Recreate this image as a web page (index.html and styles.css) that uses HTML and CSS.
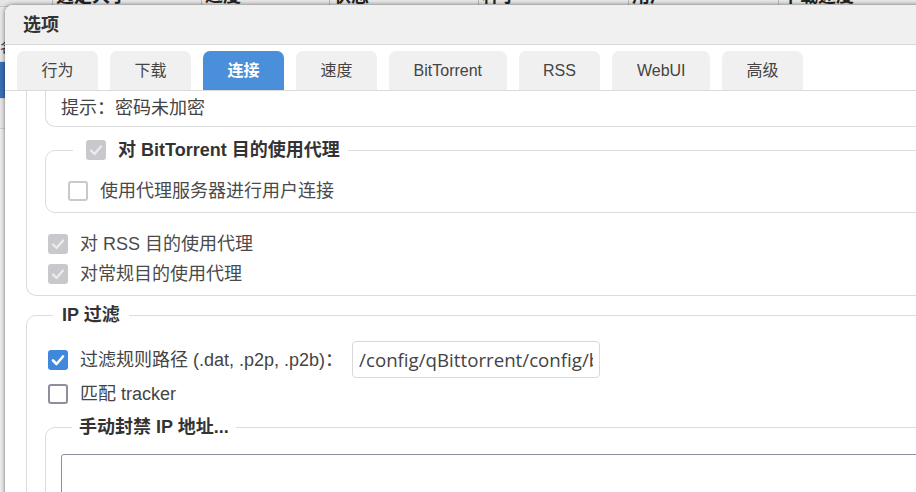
FILE: index.html
```html
<!DOCTYPE html>
<html lang="zh-CN">
<head>
<meta charset="utf-8">
<title>选项</title>
<link rel="stylesheet" href="styles.css">
</head>
<body>
<div class="desk">
  <div class="bg-head">
    <div class="hc"></div>
    <div class="hc">选定大小</div>
    <div class="hc">进度</div>
    <div class="hc">状态</div>
    <div class="hc">种子</div>
    <div class="hc">用户</div>
    <div class="hc">下载速度</div>
  </div>
  <div class="bg-side">
    <div class="srow">名</div>
    <div class="srow sel"></div>
    <div class="srow"></div>
  </div>

  <div class="dialog">
    <div class="titlebar">选项</div>
    <div class="tabs">
      <div class="tab">行为</div>
      <div class="tab">下载</div>
      <div class="tab active">连接</div>
      <div class="tab">速度</div>
      <div class="tab">BitTorrent</div>
      <div class="tab">RSS</div>
      <div class="tab">WebUI</div>
      <div class="tab">高级</div>
    </div>
    <div class="content">
      <div class="proxybox">
        <div class="note">提示：密码未加密</div>
        <fieldset class="fs fs-bt">
          <legend class="lg lg-bt">
            <span class="cb cb-dis-on"><svg viewBox="0 0 20 20"><polyline points="5,10.5 8.5,14 15,6.5"/></svg></span>
            <span class="lgtext">对 BitTorrent 目的使用代理</span>
          </legend>
          <div class="row">
            <span class="cb cb-dis-off"></span>
            <span class="lbl dim">使用代理服务器进行用户连接</span>
          </div>
        </fieldset>
        <div class="rows">
          <div class="row">
            <span class="cb cb-dis-on"><svg viewBox="0 0 20 20"><polyline points="5,10.5 8.5,14 15,6.5"/></svg></span>
            <span class="lbl dim">对 RSS 目的使用代理</span>
          </div>
          <div class="row">
            <span class="cb cb-dis-on"><svg viewBox="0 0 20 20"><polyline points="5,10.5 8.5,14 15,6.5"/></svg></span>
            <span class="lbl dim">对常规目的使用代理</span>
          </div>
        </div>
      </div>

      <fieldset class="fs fs-ip">
        <legend class="lg lg-ip">IP 过滤</legend>
        <div class="row row-path">
          <span class="cb cb-on"><svg viewBox="0 0 20 20"><polyline points="5,10.5 8.5,14 15,6.5"/></svg></span>
          <span class="lbl">过滤规则路径 (.dat, .p2p, .p2b)：</span>
          <input class="path" type="text" value="/config/qBittorrent/config/blocklist.dat">
        </div>
        <div class="row">
          <span class="cb cb-off"></span>
          <span class="lbl">匹配 tracker</span>
        </div>
        <fieldset class="fs fs-ban">
          <legend class="lg lg-ban">手动封禁 IP 地址...</legend>
          <textarea class="ban"></textarea>
        </fieldset>
      </fieldset>
    </div>
  </div>
</div>
</body>
</html>
```

FILE: styles.css
```css
* { box-sizing: border-box; }
html, body {
  margin: 0;
  padding: 0;
  width: 916px;
  height: 492px;
  overflow: hidden;
  background: #ececec;
  font-family: "Liberation Sans", "Noto Sans CJK SC", sans-serif;
  color: #444;
}
.desk {
  position: relative;
  width: 916px;
  height: 492px;
  overflow: hidden;
}
.bg-head {
  display: grid;
  grid-template-columns: 52px 149px 128px 149px 150px 150px 1fr;
  height: 26px;
  margin-top: -19px;
  background: linear-gradient(#f6f6f6, #e2e2e2);
  border-bottom: 1px solid #c8c8c8;
}
.hc {
  border-left: 1px solid #b8b8b8;
  padding-left: 3px;
  font-weight: bold;
  font-size: 18px;
  line-height: 30px;
  color: #222;
  white-space: nowrap;
  overflow: hidden;
}
.hc:first-child { border-left: none; }
.bg-side {
  width: 120px;
  padding-top: 25px;
  background: #e6e6e6;
}
.srow {
  height: 30px;
  font-size: 14px;
  line-height: 30px;
  color: #333;
  border-bottom: 1px solid #d0d0d0;
}
.srow.sel {
  height: 37px;
  background: #3a6eb4;
}

/* dialog window */
.dialog {
  position: absolute;
  left: 5px;
  top: 5px;
  width: 980px;
  height: 560px;
  background: #fff;
  border-radius: 8px 8px 0 0;
  box-shadow: 0 0 4px rgba(0, 0, 0, 0.55);
  overflow: hidden;
}
.titlebar {
  height: 40px;
  background: #f0f0f0;
  border-bottom: 1px solid #d8d8d8;
  padding-left: 18px;
  font-weight: bold;
  font-size: 18px;
  line-height: 41px;
  color: #333;
}
.tabs {
  display: flex;
  gap: 12px;
  padding: 6px 0 0 12px;
  border-bottom: 1px solid #dadada;
}
.tab {
  height: 39px;
  padding: 0 24.5px;
  background: #f0f0f0;
  border-radius: 7px 7px 0 0;
  font-size: 16px;
  line-height: 40px;
  color: #444;
}
.tab.active {
  background: #4a8fd9;
  color: #fff;
  font-weight: bold;
}

/* content */
.content {
  padding-left: 21px;
}
.proxybox {
  border: 1px solid #dcdcdc;
  border-top: none;
  border-radius: 0 0 10px 10px;
  padding: 0 0 6px 18px;
}
.note {
  border: 1px solid #dcdcdc;
  border-top: none;
  border-radius: 0 0 10px 10px;
  padding: 5px 0 6px 15px;
  font-size: 18px;
  line-height: 24px;
  color: #444;
}
.fs {
  border: 1px solid #dcdcdc;
  border-radius: 10px;
  margin: 0;
  min-width: 0;
}
.lg {
  font-size: 18px;
  line-height: 24px;
  font-weight: bold;
  color: #333;
}
.fs-bt {
  margin-top: 11px;
  padding: 14px 0 6px 22px;
}
.lg-bt {
  display: flex;
  align-items: center;
  gap: 12px;
  margin-left: 5px;
  padding: 0 8px 0 13px;
}
.rows {
  margin: 16px 0 0 3px;
}
.row {
  display: flex;
  align-items: center;
  gap: 12px;
  height: 30px;
  font-size: 18px;
  line-height: 24px;
}
.lbl { color: #444; white-space: nowrap; }
.lbl.dim { color: #4a4a4a; }

.cb {
  flex: none;
  width: 20px;
  height: 20px;
  border-radius: 3px;
  display: inline-flex;
  align-items: center;
  justify-content: center;
}
.cb svg {
  width: 20px;
  height: 20px;
  fill: none;
  stroke-width: 2.2;
  stroke-linecap: round;
  stroke-linejoin: round;
}
.cb-dis-on { background: #c9c9cd; }
.cb-dis-on svg { stroke: #ececee; }
.cb-dis-off { border: 2px solid #c9c9cd; background: #fff; }
.cb-on { background: #3f88db; }
.cb-on svg { stroke: #fff; stroke-width: 2.6; }
.cb-off { border: 2.5px solid #8f8e9c; background: #fff; }

.fs-ip {
  margin-top: 7px;
  padding: 14px 0 0 21px;
  height: 300px;
}
.lg-ip {
  margin-left: 5px;
  padding: 0 9px;
}
.row-path {
  height: 37px;
  margin-bottom: 1px;
}
.path {
  width: 248px;
  height: 37px;
  margin-left: -3px;
  border: 1px solid #d9d9d9;
  border-radius: 4px;
  padding: 0 6px;
  font-family: "Open Sans", "Liberation Sans", sans-serif;
  font-size: 18.7px;
  color: #444;
  outline: none;
}
.fs-ban {
  margin: 6px 0 0 -3px;
  padding: 15px 0 0 15px;
  height: 200px;
}
.lg-ban {
  margin-left: 11px;
  padding: 0 7px;
}
.ban {
  display: block;
  width: 900px;
  height: 120px;
  border: 1px solid #8f8e9c;
  border-radius: 3px;
  resize: none;
  margin: 0;
}
```
